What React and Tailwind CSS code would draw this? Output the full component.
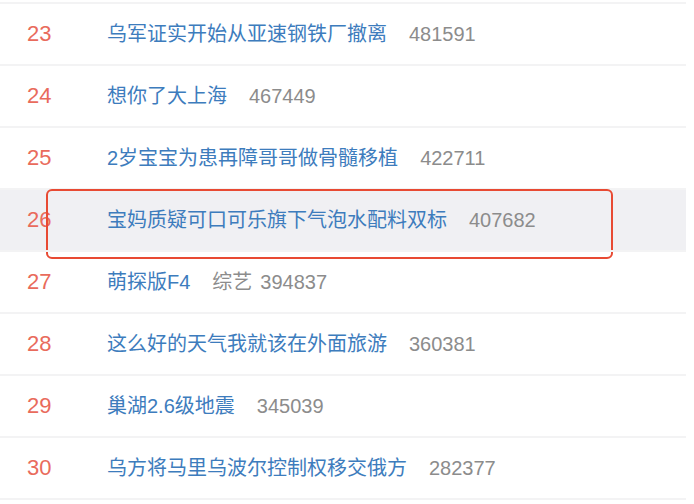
import React from "react";

const rows = [
  { n: 23, t: "乌军证实开始从亚速钢铁厂撤离", c: "481591" },
  { n: 24, t: "想你了大上海", c: "467449" },
  { n: 25, t: "2岁宝宝为患再障哥哥做骨髓移植", c: "422711" },
  { n: 26, t: "宝妈质疑可口可乐旗下气泡水配料双标", c: "407682", hl: true },
  { n: 27, t: "萌探版F4", c: "394837", tag: "综艺" },
  { n: 28, t: "这么好的天气我就该在外面旅游", c: "360381" },
  { n: 29, t: "巢湖2.6级地震", c: "345039" },
  { n: 30, t: "乌方将马里乌波尔控制权移交俄方", c: "282377" },
];

export default function App() {
  return (
    <div
      className="w-[694px] h-[504px] bg-white overflow-hidden pt-[2px]"
      style={{ fontFamily: '"Liberation Sans", "Noto Sans CJK SC", sans-serif' }}
    >
      <div className="w-[686px] border-b-2 border-[#f3f3f4]">
        {rows.map((r) => (
          <div
            key={r.n}
            className={
              "relative h-[62px] border-t-2 border-[#f3f3f4] flex items-center " +
              (r.hl ? "bg-[#f0f0f3]" : "")
            }
          >
            <div className="w-[107px] pl-[27px] text-[22px] text-[#e96b5c] leading-none">
              {r.n}
            </div>
            <div className="text-[20px] text-[#3d7cbd] leading-none whitespace-nowrap">
              {r.t}
            </div>
            {r.tag && (
              <div className="ml-[22px] text-[20px] text-[#8c8c8c] leading-none">
                {r.tag}
              </div>
            )}
            <div
              className={
                (r.tag ? "ml-[8px]" : "ml-[22px]") +
                " text-[20px] text-[#8c8c8c] leading-none"
              }
            >
              {r.c}
            </div>
            {r.hl && (
              <div className="absolute left-[46px] top-[-1px] w-[567px] h-[70px] border-2 border-[#e84a33] rounded-[6px]" />
            )}
          </div>
        ))}
      </div>
    </div>
  );
}
